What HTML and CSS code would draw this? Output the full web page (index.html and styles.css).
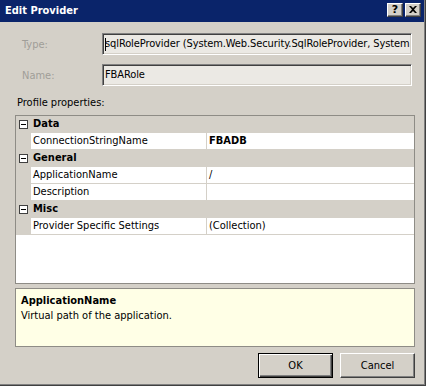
FILE: index.html
```html
<!DOCTYPE html>
<html lang="en">
<head>
    <meta charset="UTF-8">
    <title>Edit Provider</title>
    <link rel="stylesheet" href="styles.css">
</head>
<body>
    <div class="window">
        <div class="titlebar">
            <span class="title">Edit Provider</span>
            <div class="caption-buttons">
                <div class="caption-btn">?</div>
                <div class="caption-btn close">
                    <svg width="8" height="7" viewBox="0 0 8 7"><path d="M0 0h2l2 2 2-2h2L5 3.5 8 7H6L4 5 2 7H0l3-3.5z" fill="#000"/></svg>
                </div>
            </div>
        </div>

        <div class="content">
            <div class="field-row">
                <label class="field-label">Type:</label>
                <div class="textbox"><span class="caret"></span>sqlRoleProvider (System.Web.Security.SqlRoleProvider, System</div>
            </div>
            <div class="field-row">
                <label class="field-label">Name:</label>
                <div class="textbox">FBARole</div>
            </div>

            <div class="section-label">Profile properties:</div>

            <div class="grid">
                <div class="cat-row"><span class="toggle"></span>Data</div>
                <div class="prop-row">
                    <div class="prop-name">ConnectionStringName</div>
                    <div class="prop-value bold">FBADB</div>
                </div>
                <div class="cat-row"><span class="toggle"></span>General</div>
                <div class="prop-row">
                    <div class="prop-name">ApplicationName</div>
                    <div class="prop-value">/</div>
                </div>
                <div class="prop-row">
                    <div class="prop-name">Description</div>
                    <div class="prop-value"></div>
                </div>
                <div class="cat-row"><span class="toggle"></span>Misc</div>
                <div class="prop-row">
                    <div class="prop-name">Provider Specific Settings</div>
                    <div class="prop-value">(Collection)</div>
                </div>
            </div>

            <div class="help">
                <div class="help-title">ApplicationName</div>
                <div class="help-text">Virtual path of the application.</div>
            </div>

            <div class="buttons">
                <div class="btn default">OK</div>
                <div class="btn">Cancel</div>
            </div>
        </div>
    </div>
</body>
</html>
```

FILE: styles.css
```css
/* General Styles */
body {
    margin: 0;
    background-color: #fff;
    font-family: 'DejaVu Sans Condensed', 'DejaVu Sans', sans-serif;
    font-size: 11px;
    color: #000;
}

.window {
    width: 425px;
    height: 385px;
    background-color: #d4d0c8;
    border-right: 1px solid #404040;
    border-bottom: 1px solid #404040;
    box-shadow: inset -1px -1px 0 #808080;
    display: flex;
    flex-direction: column;
}

/* Title bar */
.titlebar {
    height: 22px;
    background-color: #0a246a;
    color: #fff;
    display: flex;
    align-items: center;
    padding: 0 3px 0 5px;
    margin-right: 1px;
}

.title {
    font-weight: bold;
    flex: 1;
    margin-top: -1px;
}

.caption-buttons {
    display: flex;
    gap: 2px;
    margin-top: -3px;
}

.caption-btn {
    width: 14px;
    height: 12px;
    background-color: #d4d0c8;
    border-top: 1px solid #fff;
    border-left: 1px solid #fff;
    border-right: 1px solid #404040;
    border-bottom: 1px solid #404040;
    box-shadow: inset -1px -1px 0 #808080;
    color: #000;
    font-family: 'DejaVu Sans', sans-serif;
    font-weight: bold;
    font-size: 11px;
    line-height: 12px;
    text-align: center;
}

.caption-btn.close {
    display: flex;
    align-items: center;
    justify-content: center;
}

/* Fields */
.content {
    padding: 11px 11px 0 15px;
    display: flex;
    flex-direction: column;
}

.field-row {
    display: flex;
    align-items: center;
    margin-bottom: 9px;
}

.field-label {
    width: 80px;
    padding-left: 7px;
    color: #a09e98;
}

.textbox {
    width: 306px;
    height: 20px;
    line-height: 20px;
    padding-left: 2px;
    background-color: #ebe9e4;
    border-top: 1px solid #808080;
    border-left: 1px solid #808080;
    border-right: 1px solid #fff;
    border-bottom: 1px solid #fff;
    box-shadow: inset 1px 1px 0 #404040, inset -1px -1px 0 #d4d0c8;
    white-space: nowrap;
    overflow: hidden;
    letter-spacing: -0.1px;
    position: relative;
}

.caret {
    position: absolute;
    left: 2px;
    top: 4px;
    width: 1px;
    height: 13px;
    background-color: #000;
}

.section-label {
    margin: 1px 0 5px 2px;
    height: 14px;
    line-height: 14px;
}

/* Property grid */
.grid {
    width: 398px;
    height: 167px;
    border: 1px solid #8e8c86;
    background-color: #fff;
}

.cat-row {
    height: 16px;
    line-height: 16px;
    border-bottom: 1px solid #d4d0c8;
    background-color: #d4d0c8;
    font-weight: bold;
    display: flex;
    align-items: center;
}

.toggle {
    width: 7px;
    height: 7px;
    border: 1px solid #404040;
    background-color: #fff;
    margin: 0 5px 0 3px;
    position: relative;
    box-sizing: content-box;
}

.toggle::after {
    content: "";
    position: absolute;
    left: 1px;
    top: 3px;
    width: 5px;
    height: 1px;
    background-color: #000;
}

.prop-row {
    display: flex;
    height: 16px;
    line-height: 16px;
    border-bottom: 1px solid #d4d0c8;
    border-left: 15px solid #d4d0c8;
}

.prop-name {
    width: 173px;
    padding-left: 2px;
    border-right: 1px solid #d4d0c8;
    white-space: nowrap;
}

.prop-value {
    flex: 1;
    padding-left: 2px;
}

.bold {
    font-weight: bold;
}

/* Description panel */
.help {
    margin-top: 4px;
    width: 388px;
    height: 49px;
    padding: 4px 5px;
    border: 1px solid #8e8c86;
    background-color: #ffffe6;
}

.help-title {
    font-weight: bold;
    line-height: 15px;
}

.help-text {
    line-height: 15px;
}

/* Buttons */
.buttons {
    display: flex;
    justify-content: flex-end;
    gap: 7px;
    margin-top: 6px;
    margin-right: -1px;
}

.btn {
    width: 73px;
    height: 23px;
    line-height: 23px;
    text-align: center;
    background-color: #d4d0c8;
    border-top: 1px solid #fff;
    border-left: 1px solid #fff;
    border-right: 1px solid #404040;
    border-bottom: 1px solid #404040;
    box-shadow: inset -1px -1px 0 #808080;
}

.btn.default {
    border: 1px solid #000;
    box-shadow: inset 1px 1px 0 #fff, inset -1px -1px 0 #404040, inset -2px -2px 0 #808080;
}
```
